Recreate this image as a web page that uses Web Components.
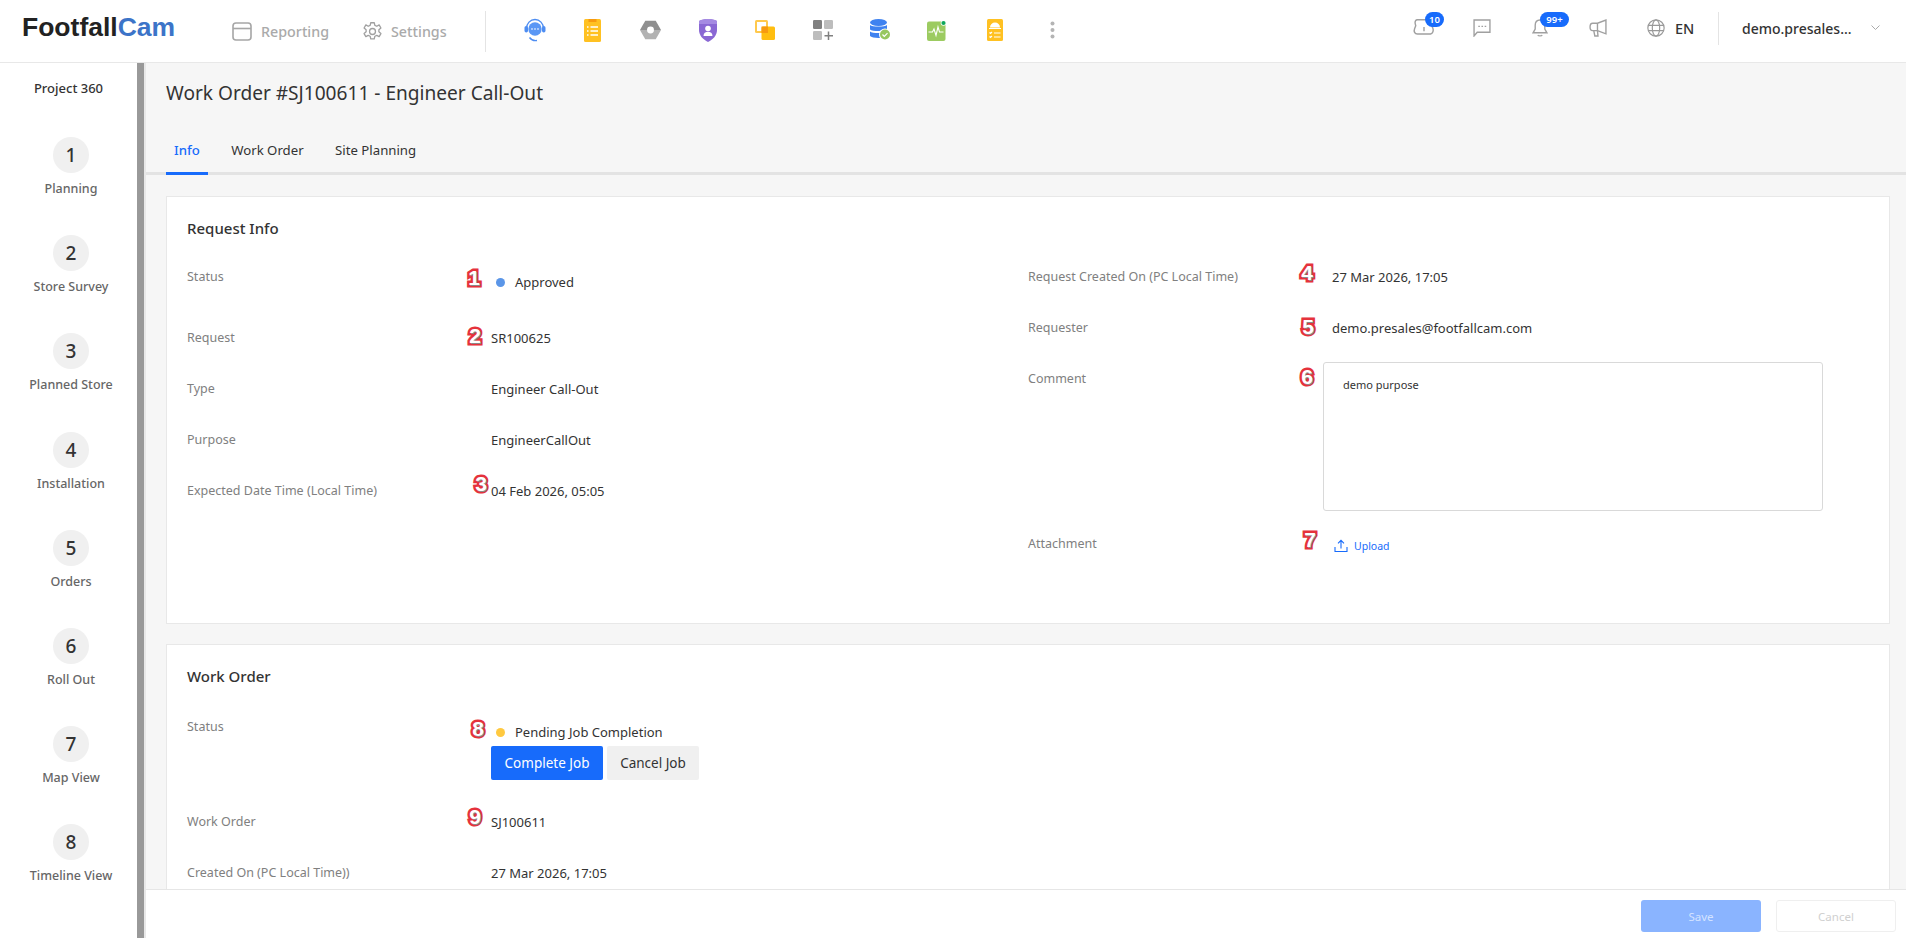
<!DOCTYPE html>
<html lang="en">
<head>
<meta charset="utf-8">
<title>Work Order #SJ100611</title>
<style>
    html, body { margin: 0; height: 100%; overflow: hidden; background: #fff; }
    body { font-family: "Noto Sans", "Open Sans", sans-serif; color: #333; }
</style>
</head>
<body>
<fc-app>
    <fc-header slot="header"></fc-header>
    <fc-sidebar slot="sidebar" title="Project 360">
        <fc-step num="1" label="Planning"></fc-step>
        <fc-step num="2" label="Store Survey"></fc-step>
        <fc-step num="3" label="Planned Store"></fc-step>
        <fc-step num="4" label="Installation"></fc-step>
        <fc-step num="5" label="Orders"></fc-step>
        <fc-step num="6" label="Roll Out"></fc-step>
        <fc-step num="7" label="Map View"></fc-step>
        <fc-step num="8" label="Timeline View"></fc-step>
    </fc-sidebar>
    <fc-tabs slot="head" title="Work Order #SJ100611 - Engineer Call-Out"></fc-tabs>

    <fc-card heading="Request Info" style="--card-h:428px;--head-gap:27px">
        <div slot="left">
            <fc-row label="Status" h="61"><fc-status color="#5b96e8">Approved</fc-status><fc-mark x="287" y="12">1</fc-mark></fc-row>
            <fc-row label="Request" h="51">SR100625<fc-mark x="288" y="9">2</fc-mark></fc-row>
            <fc-row label="Type" h="51">Engineer Call-Out</fc-row>
            <fc-row label="Purpose" h="51">EngineerCallOut</fc-row>
            <fc-row label="Expected Date Time (Local Time)" h="51">04 Feb 2026, 05:05<fc-mark x="294" y="4">3</fc-mark></fc-row>
        </div>
        <div slot="right">
            <fc-row label="Request Created On (PC Local Time)" h="51">27 Mar 2026, 17:05<fc-mark x="279" y="7">4</fc-mark></fc-row>
            <fc-row label="Requester" h="51">demo.presales@footfallcam.com<fc-mark x="280" y="10">5</fc-mark></fc-row>
            <fc-row label="Comment" h="165"><fc-comment>demo purpose</fc-comment><fc-mark x="279" y="9">6</fc-mark></fc-row>
            <fc-row label="Attachment" h="51"><fc-upload></fc-upload><fc-mark x="282" y="7">7</fc-mark></fc-row>
        </div>
    </fc-card>

    <fc-card heading="Work Order" style="--card-h:400px;--head-gap:29px">
        <div slot="left">
            <fc-row label="Status" h="95">
                <fc-status color="#ffc940">Pending Job Completion</fc-status>
                <fc-actions></fc-actions>
                <fc-mark x="291" y="13">8</fc-mark>
            </fc-row>
            <fc-row label="Work Order" h="51">SJ100611<fc-mark x="288" y="6">9</fc-mark></fc-row>
            <fc-row label="Created On (PC Local Time))" h="51">27 Mar 2026, 17:05</fc-row>
        </div>
    </fc-card>

    <fc-footer slot="footer"></fc-footer>
</fc-app>

<script>
function define(name, html, attrs) {
    class Comp extends HTMLElement {
        constructor() {
            super();
            this.attachShadow({ mode: "open" });
        }
        connectedCallback() {
            let out = html;
            (attrs || []).forEach(a => {
                out = out.split("{{" + a + "}}").join(this.getAttribute(a) || "");
            });
            this.shadowRoot.innerHTML = out;
        }
    }
    customElements.define(name, Comp);
}

define("fc-app", /*html*/ `
<style>
    :host { display: flex; flex-direction: column; width: 1906px; height: 938px; overflow: hidden; }
    .body { flex: 1; display: flex; min-height: 0; }
    .bar { width: 7px; background: #999; flex: none; }
    main { flex: 1; min-width: 0; display: flex; flex-direction: column; background: #f6f6f6; border-left: 2px solid #e8e8e8; }
    .scroll { flex: 1; min-height: 0; overflow: hidden; padding: 21px 16px 0 20px; display: flex; flex-direction: column; gap: 20px; }
</style>
<slot name="header"></slot>
<div class="body">
    <slot name="sidebar"></slot>
    <div class="bar"></div>
    <main>
        <slot name="head"></slot>
        <div class="scroll"><slot></slot></div>
        <slot name="footer"></slot>
    </main>
</div>`);

define("fc-header", /*html*/ `
<style>
    :host { display: flex; align-items: center; height: 62px; flex: none; background: #fff; border-bottom: 1px solid #e8e8e8; font-family: "Noto Sans", sans-serif; }
    .logo { margin: -7px 0 0 22px; font: bold 26.5px "Liberation Sans", sans-serif; color: #222; width: 154px; flex: none; }
    .logo b { color: #3c74c8; }
    .nav { display: flex; align-items: center; color: #aaa; font-size: 14.3px; font-weight: 500; margin-top: 0; }
    .nav svg { flex: none; }
    .rep { margin-left: 56px; display: flex; align-items: center; gap: 9px; width: 130px; }
    .set { display: flex; align-items: center; gap: 8px; }
    .div1 { width: 1px; height: 41px; background: #e4e4e4; margin-left: 38px; flex: none; }
    .apps { display: grid; grid-template-columns: repeat(10, 57.45px); margin-left: 21px; margin-top: -2px; justify-items: center; align-items: center; }
    .right { margin-left: auto; display: flex; align-items: center; margin-top: -6px; }
    .ic { width: 58px; display: flex; justify-content: center; position: relative; }
    .badge { position: absolute; top: -6px; background: #176bfb; color: #fff; border-radius: 9px; height: 15px; line-height: 15px; font-size: 9.5px; font-weight: 600; text-align: center; }
    .en { font-size: 14.5px; font-weight: 500; margin-left: -10px; width: 43px; color: #333; }
    .div2 { width: 1px; height: 33px; background: #e4e4e4; flex: none; margin-right: 23px; }
    .name { font-size: 14px; font-weight: 500; color: #333; width: 129px; white-space: nowrap; }
    .chev { margin-right: 26px; }
</style>
<div class="logo">Footfall<b>Cam</b></div>
<div class="nav">
    <div class="rep">
        <svg width="20" height="19" viewBox="0 0 20 19" fill="none" stroke="#a6a6a6" stroke-width="1.6"><rect x="1" y="1" width="18" height="17" rx="3"/><path d="M1 6.5h18"/></svg>
        <span>Reporting</span>
    </div>
    <div class="set">
        <svg width="21" height="21" viewBox="0 0 24 24" fill="none" stroke="#a0a0a0" stroke-width="1.5" stroke-linejoin="round"><circle cx="12" cy="12" r="3.4"/><path d="M10 2h4l.7 3 2.2 1 2.7-1.500 2 3.500-2.300 2v2.400l2.300 2-2 3.500-2.700-1.500-2.200 1-.7 3h-4l-.7-3-2.200-1-2.700 1.500-2-3.500 2.300-2v-2.400l-2.300-2 2-3.500 2.700 1.500 2.200-1z"/></svg>
        <span>Settings</span>
    </div>
</div>
<div class="div1"></div>
<div class="apps">
    <svg width="22" height="24" viewBox="0 0 22 24"><circle cx="11" cy="11" r="6.700" fill="#5a97f5"/><path d="M2.500 10.500a8.500 9 0 0 1 17 0M5.500 19.500c1.800 2.500 4.500 3.500 7.500 3" fill="none" stroke="#4d8df2" stroke-width="1.400"/><rect x="0.500" y="8" width="3.500" height="6.500" rx="1.700" fill="#4d8df2"/><rect x="18" y="8" width="3.500" height="6.500" rx="1.700" fill="#4d8df2"/><g fill="#cfe0fb"><circle cx="8" cy="11" r=".9"/><circle cx="11" cy="11" r=".9"/><circle cx="14" cy="11" r=".9"/></g></svg>
    <svg width="17" height="23" viewBox="0 0 17 23"><rect width="17" height="23" rx="1.500" fill="#ffc122"/><rect x="4.500" width="8" height="3" fill="#f79a10"/><g stroke="#fff" stroke-width="1.300"><path d="M3 8h1.500M6.500 8h7.500M3 12h1.500M6.500 12h7.500M3 16h1.500M6.500 16h7.500"/></g></svg>
    <svg width="21" height="20" viewBox="0 0 20 19"><path d="M5 .7h10L20 9.500H0z" fill="#8f8f8f"/><path d="M0 9.500h20l-5 8.800H5z" fill="#b2b2b2"/><circle cx="10" cy="9.500" r="3.300" fill="#fff"/></svg>
    <svg width="18" height="23" viewBox="0 0 18 23"><path d="M9 0c3 0 6 .5 9 2v9c0 5.500-4 9.500-9 12-5-2.500-9-6.500-9-12V2c3-1.500 6-2 9-2z" fill="#8a68d4"/><path d="M0 2c3-1.500 6-2 9-2s6 .5 9 2v3H0z" fill="#a58ae2"/><circle cx="9" cy="9.500" r="2.800" fill="#fff"/><path d="M4.500 17c0-3 2-4.200 4.500-4.200s4.500 1.200 4.500 4.200z" fill="#fff"/></svg>
    <svg width="20" height="20" viewBox="0 0 20 20"><rect width="13" height="13" rx="1.500" fill="#ffc94d"/><rect x="2" y="2" width="9" height="9" fill="#fff"/><rect x="6.500" y="6.500" width="13.500" height="13.500" rx="1.500" fill="#ffbe10"/><rect x="6.500" y="6.500" width="6.500" height="6.500" fill="#f79a10"/></svg>
    <svg width="20" height="20" viewBox="0 0 20 20"><rect width="9" height="9" rx="1.200" fill="#808080"/><rect x="11" width="9" height="9" rx="1.200" fill="#bdbdbd"/><rect y="11" width="9" height="9" rx="1.200" fill="#bdbdbd"/><path d="M15.500 11.500v8.500M11.500 15.700H20" stroke="#808080" stroke-width="1.500"/></svg>
    <svg width="21" height="22" viewBox="0 0 21 22"><ellipse cx="8.500" cy="3.500" rx="8.500" ry="3.500" fill="#3f82f0"/><path d="M0 6c2 2 15 2 17 0v4.500c-2 2-15 2-17 0z" fill="#3f82f0"/><path d="M0 12.500c2 2 15 2 17 0V17c-2 2.500-15 2.500-17 0z" fill="#3f82f0"/><circle cx="15" cy="15.500" r="6" fill="#fff"/><circle cx="15" cy="15.500" r="5" fill="#97c75f"/><path d="M12.500 15.500l1.800 1.800 3.200-3.200" fill="none" stroke="#fff" stroke-width="1.200"/></svg>
    <svg width="20" height="21" viewBox="0 0 20 21"><rect y="1.500" width="18.500" height="19.500" rx="2" fill="#9ccb61"/><path d="M1.500 12h4l1.500-3 2 6.500 2-8.500 1.500 5h4" fill="none" stroke="#fff" stroke-width="1.100"/><circle cx="16.500" cy="3" r="2.800" fill="#fff"/><circle cx="16.500" cy="3" r="2.100" fill="#0ea85c"/></svg>
    <svg width="16" height="22" viewBox="0 0 16 22"><rect width="16" height="22" rx="1.500" fill="#ffc122"/><path d="M3 8.500a5 5 0 0 1 10 0zM2 9h12v1H2z" fill="#fff"/><g fill="none" stroke="#fff" stroke-width="1.100"><path d="M2.500 13.500l1 1 1.500-1.500M7 14h6.500M2.500 17.500l1 1 1.500-1.500M7 18h6.500"/></g></svg>
    <svg width="5" height="18" viewBox="0 0 5 18" fill="#b4b4b4"><circle cx="2.500" cy="2.500" r="2"/><circle cx="2.500" cy="9" r="2"/><circle cx="2.500" cy="15.500" r="2"/></svg>
</div>
<div class="right">
    <div class="ic">
        <svg width="22" height="20" viewBox="0 0 20 18" fill="none" stroke="#a0a0a0" stroke-width="1.300"><path d="M4 1.500h11c2 0 3 1.500 2.500 3.500l-.5 2 1 2c1 2.500 0 5-2 5.500H4c-2.500 0-3.500-2.500-2.500-5L2.500 7 2 5C1.500 3 2.500 1.500 4 1.500z"/><path d="M10 8v4"/></svg>
        <span class="badge" style="left:30px;width:19px">10</span>
    </div>
    <div class="ic">
        <svg width="18" height="18" viewBox="0 0 17 17" fill="none" stroke="#a0a0a0" stroke-width="1.300"><path d="M1 1h15v11.500H4L1 16z"/><path d="M5 7h1.500M8 7h1.500M11 7h1.500" stroke-width="1.300"/></svg>
    </div>
    <div class="ic">
        <svg width="16" height="20" viewBox="0 0 15 18" fill="none" stroke="#a0a0a0" stroke-width="1.300"><path d="M7.500 1.500c-3 0-4.500 2-4.500 5v3.500l-2 3.500h13l-2-3.500V6.500c0-3-1.500-5-4.500-5z"/><path d="M5.500 15.500c.5 1.200 3.500 1.200 4 0"/></svg>
        <span class="badge" style="left:29px;width:29px">99+</span>
    </div>
    <div class="ic">
        <svg width="18" height="18" viewBox="0 0 17 17" fill="none" stroke="#a0a0a0" stroke-width="1.300"><path d="M16 1v13L8 11H3.500C1.500 11 1 9.500 1 7.500S1.500 4 3.500 4H8z"/><path d="M8 4v7M4.500 11l1 5h3l-.5-5"/></svg>
    </div>
    <div class="ic">
        <svg width="18" height="18" viewBox="0 0 17 17" fill="none" stroke="#999" stroke-width="1.100"><circle cx="8.500" cy="8.500" r="7.700"/><ellipse cx="8.500" cy="8.500" rx="3.500" ry="7.700"/><path d="M1.200 6h14.600M1.200 11h14.600"/></svg>
    </div>
    <div class="en">EN</div>
    <div class="div2"></div>
    <div class="name">demo.presales...</div>
    <svg class="chev" width="9" height="6" viewBox="0 0 9 6" fill="none" stroke="#aaa" stroke-width="1"><path d="M.5.500l4 4 4-4"/></svg>
</div>`);

define("fc-sidebar", /*html*/ `
<style>
    :host { display: flex; flex-direction: column; align-items: center; width: 137px; flex: none; background: #fff; box-sizing: border-box; }
    .title { font-size: 13px; font-weight: 500; color: #333; line-height: 18px; margin: 16px 0 40px; }
    .list { display: flex; flex-direction: column; align-items: center; gap: 26px; width: 100%; padding-left: 5px; box-sizing: border-box; }
</style>
<div class="title">{{title}}</div>
<div class="list"><slot></slot></div>`, ["title"]);

define("fc-step", /*html*/ `
<style>
    :host { display: flex; flex-direction: column; align-items: center; height: 72.2px; }
    .n { width: 36px; height: 36px; border-radius: 50%; background: #f0f0f0; display: flex; align-items: center; justify-content: center; font-size: 19px; color: #333; font-weight: 500; }
    .l { margin-top: 7px; font-size: 12.5px; font-weight: 500; line-height: 18px; color: #666; white-space: nowrap; }
</style>
<div class="n">{{num}}</div>
<div class="l">{{label}}</div>`, ["num", "label"]);

define("fc-tabs", /*html*/ `
<style>
    :host { display: block; flex: none; }
    h1 { margin: 0; padding: 17px 0 0 20px; font-size: 19.1px; line-height: 26px; font-weight: 400; color: #333; }
    .tabs { display: flex; gap: 15.5px; padding-left: 20px; margin-top: 24px; border-bottom: 3px solid #e3e3e3; height: 42px; }
    .tab { padding: 0 8px; font-size: 13.2px; line-height: 40px; height: 42px; color: #333; box-sizing: border-box; }
    .on { color: #176bfb; font-weight: 500; border-bottom: 3px solid #176bfb; height: 45px; }
</style>
<h1>{{title}}</h1>
<div class="tabs">
    <div class="tab on">Info</div>
    <div class="tab">Work Order</div>
    <div class="tab">Site Planning</div>
</div>`, ["title"]);

define("fc-card", /*html*/ `
<style>
    :host { display: block; flex: none; height: var(--card-h); box-sizing: border-box; background: #fff; border: 1px solid #e8e8e8; padding: 21px 20px 0 20px; }
    h2 { margin: 0 0 var(--head-gap); font-size: 15px; line-height: 21px; font-weight: 500; color: #333; }
    .cols { display: grid; grid-template-columns: 841px 1fr; }
</style>
<h2>{{heading}}</h2>
<div class="cols">
    <div><slot name="left"></slot></div>
    <div><slot name="right"></slot></div>
</div>`, ["heading"]);

define("fc-row", /*html*/ `
<style>
    :host { display: grid; grid-template-columns: 304px 1fr; position: relative; font-size: 13px; line-height: 21px; color: #333; height: {{h}}px; }
    .k { color: #808080; font-size: 12.5px; }
    .v { padding-top: 1px; }
</style>
<div class="k">{{label}}</div>
<div class="v"><slot></slot></div>`, ["label", "h"]);

define("fc-status", /*html*/ `
<style>
    :host { display: flex; align-items: center; margin-top: 5px; padding-left: 5px; gap: 10px; height: 21px; white-space: nowrap; }
    i { width: 9px; height: 9px; border-radius: 50%; background: {{color}}; flex: none; margin-top: -1px; }
</style>
<i></i><span><slot></slot></span>`, ["color"]);

define("fc-mark", /*html*/ `
<style>
    :host { position: absolute; left: {{x}}px; top: {{y}}px; transform: translate(-50%, -50%); font: bold 21px/24px "Liberation Sans", sans-serif; color: #fff; -webkit-text-stroke: 5px #e5323c; paint-order: stroke fill; text-shadow: 1px 1px 0 #8a8a8a; }
</style>
<slot></slot>`, ["x", "y"]);

define("fc-comment", /*html*/ `
<style>
    :host { display: block; box-sizing: border-box; width: 500px; height: 149px; margin: -7px 0 0 -9px; border: 1px solid #d9d9d9; border-radius: 3px; padding: 13px 19px; font-size: 11px; line-height: 18px; color: #333; }
</style>
<slot></slot>`);

define("fc-upload", /*html*/ `
<style>
    :host { display: flex; align-items: center; gap: 6px; color: #176bfb; font-size: 10.5px; margin: 0 0 0 2px; height: 24px; }
</style>
<svg width="14" height="14" viewBox="0 0 14 14" fill="none" stroke="#176bfb" stroke-width="1.100"><path d="M7 9.500V1.500M4 4.300l3-3 3 3M1 8v4.500h12V8"/></svg>
<span>Upload</span>`);

define("fc-actions", /*html*/ `
<style>
    :host { display: flex; gap: 4px; margin-top: 3px; }
    button { font: 13.5px "Noto Sans", sans-serif; height: 34px; border: 0; border-radius: 2px; padding: 0; }
    .a { width: 112px; background: #176bfb; color: #fff; }
    .b { width: 92px; background: #f0f0f0; color: #333; }
</style>
<button class="a">Complete Job</button><button class="b">Cancel Job</button>`);

define("fc-footer", /*html*/ `
<style>
    :host { display: flex; justify-content: flex-end; align-items: center; gap: 15px; flex: none; height: 48px; box-sizing: content-box; background: #fff; border-top: 1px solid #e6e6e6; padding: 0 10px 0 0; }
    button { width: 120px; height: 32px; margin-top: 4px; font: 11.5px "Noto Sans", sans-serif; border-radius: 3px; padding: 0; }
    .s { background: #8ab4ff; border: 0; color: #d4e3ff; }
    .c { background: #fff; border: 1px solid #efefef; color: #d0d0d0; }
</style>
<button class="s">Save</button><button class="c">Cancel</button>`);
</script>
</body>
</html>
